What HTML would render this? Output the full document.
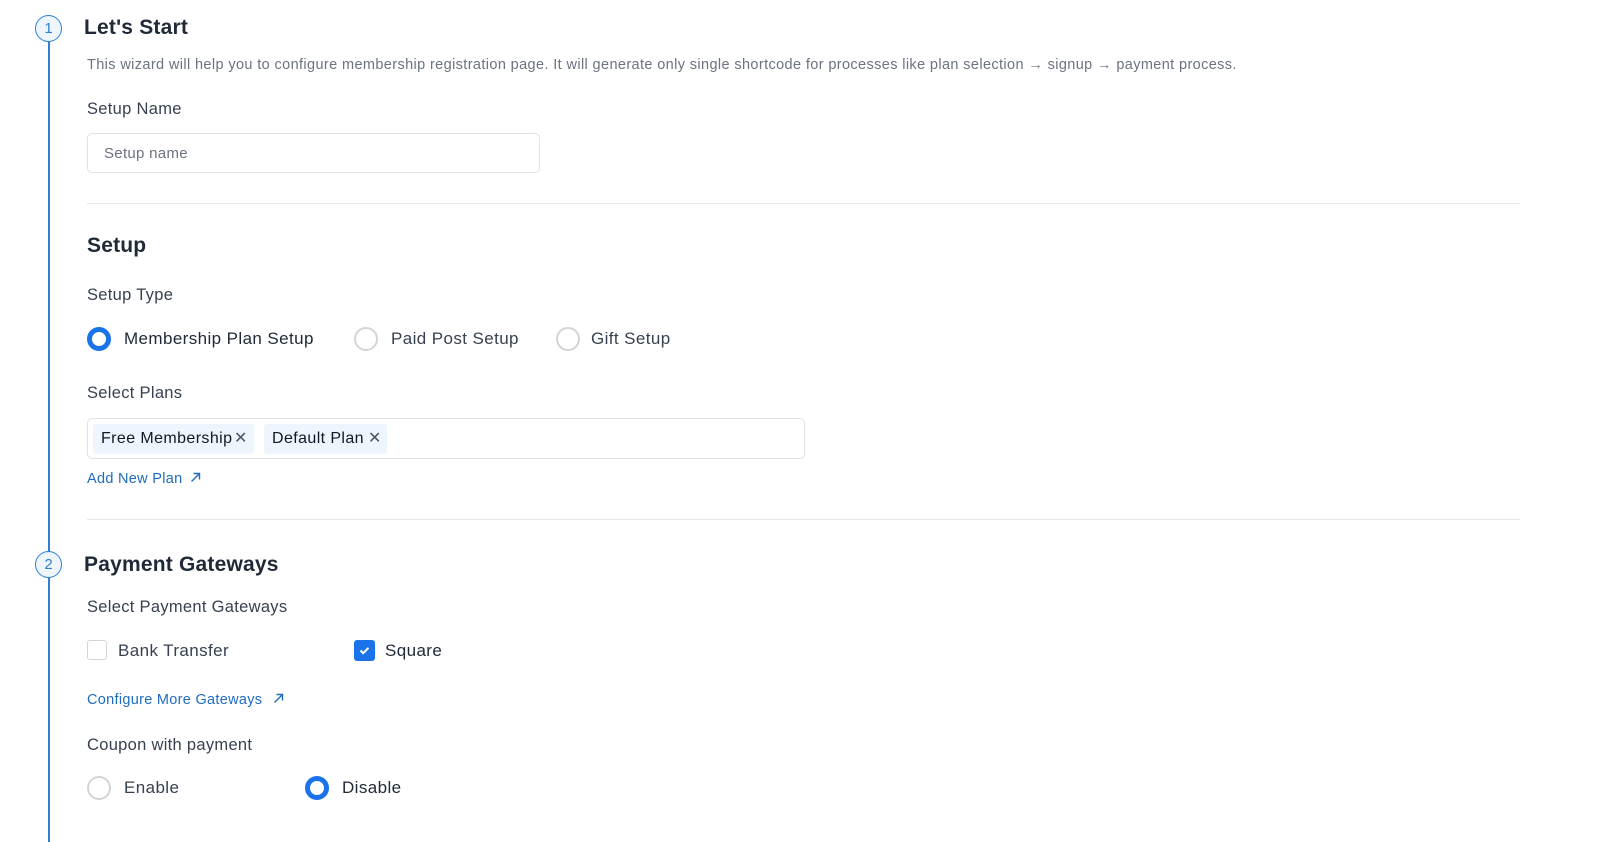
<!DOCTYPE html>
<html><head><meta charset="utf-8"><style>
body{margin:0;width:1599px;height:837px;background:#fff;font-family:"Liberation Sans",sans-serif;position:relative;overflow:hidden;color:#1f2937}
.a{position:absolute;white-space:nowrap}
.line{position:absolute;left:48px;top:42px;width:2px;height:800px;background:#2f80d1}
.step{position:absolute;width:25px;height:25px;border:1.5px solid #2f80d1;border-radius:50%;background:#eef5fd;color:#2f80d1;font-size:15px;text-align:center;line-height:25px;box-sizing:content-box}
.h{font-size:21px;font-weight:bold;color:#1f2937;letter-spacing:.2px}
.lbl{font-size:16.5px;color:#374151;letter-spacing:.3px}
.radio{position:absolute;width:20px;height:20px;border:2px solid #d4d4d8;border-radius:50%}
.radio.on{border:5px solid #1a73e8;width:14px;height:14px}
.opt{font-size:17px;color:#1f2937;letter-spacing:.4px}
.hr{position:absolute;left:87px;width:1433px;height:1px;background:#e5e7eb}
.link{font-size:14.5px;color:#1e6cbf;letter-spacing:.3px}
.tag{position:absolute;top:424px;height:30px;background:#eff5fc;border-radius:3px;font-size:16px;line-height:30px;padding-left:8px;color:#111827;letter-spacing:.4px}
</style></head><body>
<div class="line"></div>
<div class="step" style="left:35px;top:15px">1</div>
<div class="step" style="left:35px;top:551px">2</div>

<div class="a h" style="left:84px;top:16px">Let's Start</div>
<div class="a" style="left:87px;top:57px;font-size:14.5px;color:#6b7280;letter-spacing:.38px">This wizard will help you to configure membership registration page. It will generate only single shortcode for processes like plan selection → signup → payment process.</div>
<div class="a lbl" style="left:87px;top:100px">Setup Name</div>
<div class="a" style="left:87px;top:133px;width:451px;height:38px;border:1px solid #dfe1e5;border-radius:5px"></div>
<div class="a" style="left:104px;top:145px;font-size:15px;color:#6b7280;letter-spacing:.3px">Setup name</div>
<div class="hr" style="top:203px"></div>

<div class="a h" style="left:87px;top:234px">Setup</div>
<div class="a lbl" style="left:87px;top:286px">Setup Type</div>
<div class="radio on" style="left:87px;top:327px"></div>
<div class="a opt" style="left:124px;top:329px">Membership Plan Setup</div>
<div class="radio" style="left:354px;top:327px"></div>
<div class="a opt" style="left:391px;top:329px;color:#374151">Paid Post Setup</div>
<div class="radio" style="left:556px;top:327px"></div>
<div class="a opt" style="left:591px;top:329px;color:#374151">Gift Setup</div>

<div class="a lbl" style="left:87px;top:384px">Select Plans</div>
<div class="a" style="left:87px;top:418px;width:716px;height:39px;border:1px solid #dfe1e5;border-radius:5px"></div>
<div class="tag" style="left:93px;width:153px">Free Membership <span style="position:absolute;left:141px;color:#4b5563">✕</span></div>
<div class="tag" style="left:264px;width:115px">Default Plan <span style="position:absolute;left:104px;color:#4b5563">✕</span></div>
<div class="a link" style="left:87px;top:471px">Add New Plan <svg width="11" height="11" viewBox="0 0 11 11" style="margin-left:3px"><path d="M1.5 9.5L9.5 1.5M3.5 1.5H9.5V7.5" stroke="#1e6cbf" stroke-width="1.4" fill="none"/></svg></div>
<div class="hr" style="top:519px"></div>

<div class="a h" style="left:84px;top:553px">Payment Gateways</div>
<div class="a lbl" style="left:87px;top:598px">Select Payment Gateways</div>
<div class="a" style="left:87px;top:640px;width:18px;height:18px;border:1.5px solid #d4d4d8;border-radius:3px"></div>
<div class="a opt" style="left:118px;top:641px;color:#374151">Bank Transfer</div>
<div class="a" style="left:354px;top:640px;width:21px;height:21px;background:#1a73e8;border-radius:3px"><svg width="21" height="21" viewBox="0 0 21 21"><path d="M6.5 10.5L9.2 13.2L14.5 7.8" stroke="#fff" stroke-width="2" fill="none"/></svg></div>
<div class="a opt" style="left:385px;top:641px">Square</div>
<div class="a link" style="left:87px;top:692px">Configure More Gateways <svg width="11" height="11" viewBox="0 0 11 11" style="margin-left:6px"><path d="M1.5 9.5L9.5 1.5M3.5 1.5H9.5V7.5" stroke="#1e6cbf" stroke-width="1.4" fill="none"/></svg></div>
<div class="a lbl" style="left:87px;top:736px">Coupon with payment</div>
<div class="radio" style="left:87px;top:776px"></div>
<div class="a opt" style="left:124px;top:778px;color:#374151">Enable</div>
<div class="radio on" style="left:305px;top:776px"></div>
<div class="a opt" style="left:342px;top:778px">Disable</div>
</body></html>
